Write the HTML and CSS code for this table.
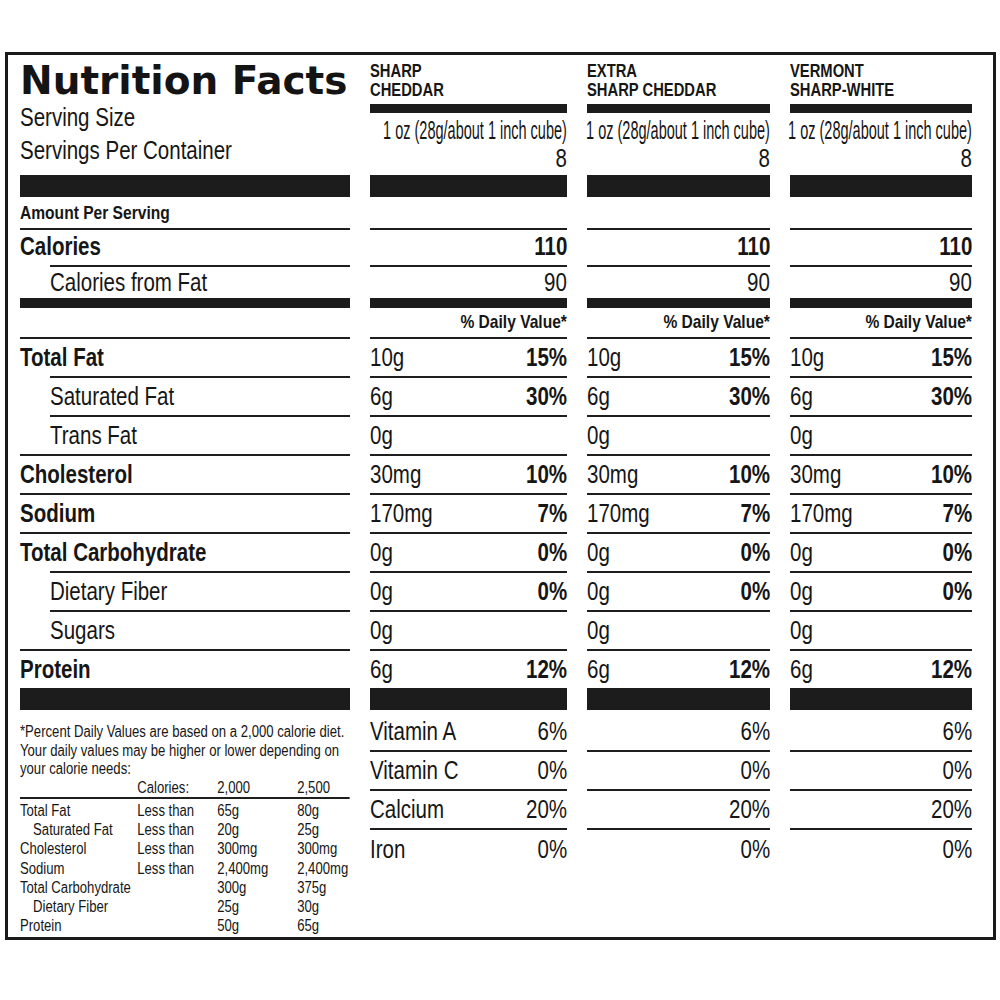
FILE: index.html
```html
<!DOCTYPE html>
<html lang="en">
<head>
<meta charset="utf-8">
<title>Nutrition Facts</title>
<link rel="stylesheet" href="styles.css">
</head>
<body>
<main class="label">
  <div class="row head">
    <div class="intro">
      <h1 class="title">Nutrition Facts</h1>
      <p class="serving"><span>Serving Size</span></p>
      <p class="serving"><span>Servings Per Container</span></p>
    </div>
    <div class="prod">
      <h2 class="prod-name"><span>SHARP</span><span>CHEDDAR</span></h2>
      <div class="bar-thin"></div>
      <p class="size first"><span class="squeeze">1 oz (28g/about 1 inch cube)</span></p>
      <p class="size"><span>8</span></p>
    </div>
    <div class="prod">
      <h2 class="prod-name"><span>EXTRA</span><span>SHARP CHEDDAR</span></h2>
      <div class="bar-thin"></div>
      <p class="size first"><span class="squeeze">1 oz (28g/about 1 inch cube)</span></p>
      <p class="size"><span>8</span></p>
    </div>
    <div class="prod">
      <h2 class="prod-name"><span>VERMONT</span><span>SHARP-WHITE</span></h2>
      <div class="bar-thin"></div>
      <p class="size first"><span class="squeeze">1 oz (28g/about 1 inch cube)</span></p>
      <p class="size"><span>8</span></p>
    </div>
  </div>

  <div class="row bars thick"><div></div><div></div><div></div><div></div></div>

  <div class="row r-amount">
    <div class="c small-bold"><span>Amount Per Serving</span></div>
    <div class="c"></div><div class="c"></div><div class="c"></div>
  </div>

  <div class="row line r-cal">
    <div class="c b"><span>Calories</span></div>
    <div class="c end"><b>110</b></div>
    <div class="c end"><b>110</b></div>
    <div class="c end"><b>110</b></div>
  </div>

  <div class="row line r-calfat">
    <div class="c indent"><span>Calories from Fat</span></div>
    <div class="c end"><span>90</span></div>
    <div class="c end"><span>90</span></div>
    <div class="c end"><span>90</span></div>
  </div>

  <div class="row bars medium"><div></div><div></div><div></div><div></div></div>

  <div class="row r-dv">
    <div class="c"></div>
    <div class="c end small-bold"><span>% Daily Value*</span></div>
    <div class="c end small-bold"><span>% Daily Value*</span></div>
    <div class="c end small-bold"><span>% Daily Value*</span></div>
  </div>

  <div class="row line r-nut">
    <div class="c b"><span>Total Fat</span></div>
    <div class="c"><span>10g</span><b>15%</b></div>
    <div class="c"><span>10g</span><b>15%</b></div>
    <div class="c"><span>10g</span><b>15%</b></div>
  </div>
  <div class="row line r-nut">
    <div class="c indent"><span>Saturated Fat</span></div>
    <div class="c"><span>6g</span><b>30%</b></div>
    <div class="c"><span>6g</span><b>30%</b></div>
    <div class="c"><span>6g</span><b>30%</b></div>
  </div>
  <div class="row line r-nut">
    <div class="c indent"><span>Trans Fat</span></div>
    <div class="c"><span>0g</span></div>
    <div class="c"><span>0g</span></div>
    <div class="c"><span>0g</span></div>
  </div>
  <div class="row line r-nut">
    <div class="c b"><span>Cholesterol</span></div>
    <div class="c"><span>30mg</span><b>10%</b></div>
    <div class="c"><span>30mg</span><b>10%</b></div>
    <div class="c"><span>30mg</span><b>10%</b></div>
  </div>
  <div class="row line r-nut">
    <div class="c b"><span>Sodium</span></div>
    <div class="c"><span>170mg</span><b>7%</b></div>
    <div class="c"><span>170mg</span><b>7%</b></div>
    <div class="c"><span>170mg</span><b>7%</b></div>
  </div>
  <div class="row line r-nut">
    <div class="c b"><span>Total Carbohydrate</span></div>
    <div class="c"><span>0g</span><b>0%</b></div>
    <div class="c"><span>0g</span><b>0%</b></div>
    <div class="c"><span>0g</span><b>0%</b></div>
  </div>
  <div class="row line r-nut">
    <div class="c indent"><span>Dietary Fiber</span></div>
    <div class="c"><span>0g</span><b>0%</b></div>
    <div class="c"><span>0g</span><b>0%</b></div>
    <div class="c"><span>0g</span><b>0%</b></div>
  </div>
  <div class="row line r-nut">
    <div class="c indent"><span>Sugars</span></div>
    <div class="c"><span>0g</span></div>
    <div class="c"><span>0g</span></div>
    <div class="c"><span>0g</span></div>
  </div>
  <div class="row line r-nut">
    <div class="c b"><span>Protein</span></div>
    <div class="c"><span>6g</span><b>12%</b></div>
    <div class="c"><span>6g</span><b>12%</b></div>
    <div class="c"><span>6g</span><b>12%</b></div>
  </div>

  <div class="row bars thick"><div></div><div></div><div></div><div></div></div>

  <div class="row foot">
    <div class="foot-cell">
      <div class="footnote">
        <p class="fn-text">*Percent Daily Values are based on a 2,000 calorie diet. Your daily values may be higher or lower depending on your calorie needs:</p>
        <div class="fn-row fn-head"><span></span><span>Calories:</span><span>2,000</span><span>2,500</span></div>
        <div class="fn-body">
          <div class="fn-row"><span>Total Fat</span><span>Less than</span><span>65g</span><span>80g</span></div>
          <div class="fn-row"><span class="fn-indent">Saturated Fat</span><span>Less than</span><span>20g</span><span>25g</span></div>
          <div class="fn-row"><span>Cholesterol</span><span>Less than</span><span>300mg</span><span>300mg</span></div>
          <div class="fn-row"><span>Sodium</span><span>Less than</span><span>2,400mg</span><span>2,400mg</span></div>
          <div class="fn-row"><span>Total Carbohydrate</span><span></span><span>300g</span><span>375g</span></div>
          <div class="fn-row"><span class="fn-indent">Dietary Fiber</span><span></span><span>25g</span><span>30g</span></div>
          <div class="fn-row"><span>Protein</span><span></span><span>50g</span><span>65g</span></div>
        </div>
      </div>
    </div>
    <div class="vits">
      <div class="vit"><span>Vitamin A</span><span>6%</span></div>
      <div class="vit"><span>Vitamin C</span><span>0%</span></div>
      <div class="vit"><span>Calcium</span><span>20%</span></div>
      <div class="vit"><span>Iron</span><span>0%</span></div>
    </div>
    <div class="vits">
      <div class="vit end"><span>6%</span></div>
      <div class="vit end"><span>0%</span></div>
      <div class="vit end"><span>20%</span></div>
      <div class="vit end"><span>0%</span></div>
    </div>
    <div class="vits">
      <div class="vit end"><span>6%</span></div>
      <div class="vit end"><span>0%</span></div>
      <div class="vit end"><span>20%</span></div>
      <div class="vit end"><span>0%</span></div>
    </div>
  </div>
</main>
</body>
</html>
```

FILE: styles.css
```css
* {
  box-sizing: border-box;
  margin: 0;
  padding: 0;
}

body {
  margin: 0;
  background: #ffffff;
  color: #161616;
  font-family: "Liberation Sans", Arial, sans-serif;
}

.label {
  width: 991px;
  margin: 52px 0 0 5px;
  border: 3px solid #1a1a1a;
  padding: 6px 21px 2px 12px;
}

.row {
  display: grid;
  grid-template-columns: 330px 197px 183px 182px;
  column-gap: 20px;
}

/* condensed look: Liberation Sans narrowed horizontally */
.serving > span,
.prod-name > span,
.size > span,
.c > span,
.c > b,
.vit > span {
  display: inline-block;
  white-space: nowrap;
  transform: scaleX(0.82);
  transform-origin: 0 50%;
}

.size > span,
.c.end > *,
.c > *:last-child:not(:first-child),
.vit > span:last-child {
  transform-origin: 100% 50%;
}

/* header */
.title {
  font-family: "DejaVu Sans", "Liberation Sans", sans-serif;
  font-weight: bold;
  font-size: 39px;
  line-height: 40px;
  color: #141414;
  white-space: nowrap;
}

.serving {
  font-size: 25px;
  line-height: 33px;
}

.prod-name {
  display: flex;
  flex-direction: column;
  align-items: flex-start;
  margin-top: 1px;
  font-size: 18px;
  line-height: 19px;
  font-weight: bold;
}

.bar-thin {
  height: 9px;
  margin-top: 4px;
  background: #1c1c1c;
}

.size {
  display: flex;
  justify-content: flex-end;
  font-size: 25px;
  line-height: 28px;
  white-space: nowrap;
}

.size.first {
  margin-top: 3px;
}

.size > .squeeze {
  transform: scaleX(0.58);
}

/* bars */
.bars > div {
  background: #1c1c1c;
}

.bars.thick {
  height: 22px;
  margin-top: 3px;
}

.r-nut + .bars.thick {
  margin-top: 0;
}

.bars.medium {
  height: 10px;
}

/* data rows */
.c {
  display: flex;
  align-items: center;
  justify-content: space-between;
  font-size: 25px;
  white-space: nowrap;
}

.c.end {
  justify-content: flex-end;
}

.c.b,
.c b {
  font-weight: bold;
}

.line > .c {
  border-top: 2px solid #1e1e1e;
}

.indent {
  margin-left: 30px;
}

.small-bold {
  font-size: 19px;
  font-weight: bold;
}

.r-amount {
  height: 31px;
}

.r-cal {
  height: 37px;
}

.r-cal > .c {
  padding-bottom: 3px;
}

.r-calfat {
  height: 33px;
}

.r-dv {
  height: 29px;
}

.r-dv > .c {
  padding-bottom: 2px;
}

.r-nut {
  height: 39px;
}

/* footer */
.foot {
  align-items: start;
}

.foot-cell {
  width: 330px;
}

.footnote {
  width: 402px;
  margin-top: 13px;
  font-size: 16px;
  transform: scaleX(0.82);
  transform-origin: 0 0;
}

.fn-text {
  line-height: 18.5px;
}

.fn-row {
  display: grid;
  grid-template-columns: 143px 97.5px 97.5px 1fr;
  line-height: 19.2px;
  white-space: nowrap;
}

.fn-head {
  line-height: 18.5px;
  border-bottom: 2px solid #1e1e1e;
}

.fn-body {
  padding-top: 2px;
}

.fn-indent {
  padding-left: 16px;
}

.vits {
  margin-top: 3px;
}

.vit {
  display: flex;
  align-items: center;
  justify-content: space-between;
  height: 39px;
  font-size: 25px;
  border-bottom: 2px solid #1e1e1e;
}

.vit.end {
  justify-content: flex-end;
}

.vit:last-child {
  border-bottom: none;
}
```
